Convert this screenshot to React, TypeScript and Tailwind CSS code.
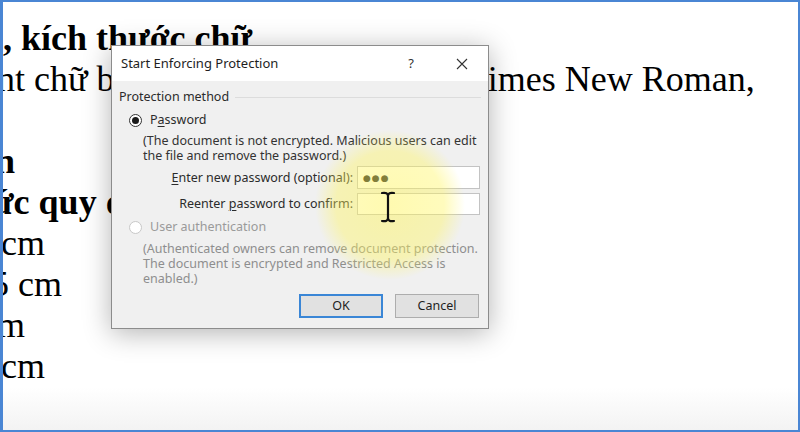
import React from "react";

const serif = { fontFamily: '"Liberation Serif", "Times New Roman", serif' };
const ui = { fontFamily: '"Noto Sans", "Open Sans", sans-serif' };

function DocumentText() {
  return (
    <div className="pt-[16px] text-[36px] leading-[41px] text-black whitespace-nowrap" style={serif}>
      <div className="font-bold">, kích thước chữ</div>
      <div className="flex -ml-[6px]">
        <span className="inline-block w-[470px] overflow-hidden">nt chữ bằng font chữ</span>
        <span>Times New Roman,</span>
      </div>
      <div>&nbsp;</div>
      <div className="font-bold -ml-[8px]">n</div>
      <div className="font-bold -ml-[11px]">ức quy định</div>
      <div className="-ml-[2px]">cm</div>
      <div className="-ml-[12px]">5 cm</div>
      <div className="-ml-[22px]">cm</div>
      <div className="-ml-[2px]">cm</div>
    </div>
  );
}

function Radio({ checked, disabled }: { checked?: boolean; disabled?: boolean }) {
  return (
    <span
      className={`flex h-[13px] w-[13px] items-center justify-center rounded-full border bg-white ${
        disabled ? "border-[#c8c8c8]" : "border-[#333333]"
      }`}
    >
      {checked && <span className="h-[7px] w-[7px] rounded-full bg-[#1a1a1a]" />}
    </span>
  );
}

function CloseIcon() {
  return (
    <svg width="12" height="12" viewBox="0 0 12 12" fill="none">
      <path d="M1 1 L11 11 M11 1 L1 11" stroke="#333" strokeWidth="1.1" />
    </svg>
  );
}

function IBeam() {
  return (
    <svg width="16" height="32" viewBox="0 0 16 32" fill="none">
      <path
        d="M2 2 Q8 1 8 5 Q8 1 14 2 M8 5 L8 27 M2 30 Q8 31 8 27 Q8 31 14 30"
        stroke="#111"
        strokeWidth="2.2"
        strokeLinecap="round"
      />
    </svg>
  );
}

function Dialog() {
  return (
    <div
      className="absolute left-[108px] top-[43px] flex h-[284px] w-[378px] flex-col border border-[#8c8c8c] bg-[#f0f0f0] text-[12.5px] shadow-[0_4px_26px_rgba(0,0,0,0.3)]"
      style={ui}
    >
      {/* title bar */}
      <div className="flex h-[35px] items-center bg-white pl-[9px] text-[13px] text-[#1e1e1e]">
        <span className="flex-1">Start Enforcing Protection</span>
        <span className="mr-[42px] text-[13px] text-[#333]">?</span>
        <span className="mr-[20px] flex">
          <CloseIcon />
        </span>
      </div>

      {/* body */}
      <div className="flex flex-col px-[7px] leading-[16px] text-[#2b2b2b]">
        <div className="mt-[8px] flex items-center gap-[6px]">
          <span>Protection method</span>
          <span className="h-px flex-1 bg-[#dcdcdc]" />
        </div>

        <div className="mt-[7px] flex items-center gap-[8px] pl-[10px]">
          <Radio checked />
          <span>
            P<span className="underline underline-offset-2">a</span>ssword
          </span>
        </div>

        <div className="mt-[5px] pl-[24px] leading-[15px] text-[#333]">
          <div>(The document is not encrypted. Malicious users can edit</div>
          <div>the file and remove the password.)</div>
        </div>

        <div className="mt-[3px] flex items-center justify-end gap-[4px] pr-[1px]">
          <span>
            <span className="underline underline-offset-2">E</span>nter new password (optional):
          </span>
          <div className="flex h-[23px] w-[123px] items-center border border-[#c3c3c3] bg-white pl-[5px]">
            <span className="text-[9px] tracking-[1px] text-[#222]" style={{ fontFamily: '"DejaVu Sans", sans-serif' }}>
              ●●●
            </span>
          </div>
        </div>

        <div className="mt-[4px] flex items-center justify-end gap-[4px] pr-[1px]">
          <span>
            Reenter <span className="underline underline-offset-2">p</span>assword to confirm:
          </span>
          <div className="h-[22px] w-[123px] border border-[#c3c3c3] bg-white" />
        </div>

        <div className="mt-[4px] flex items-center gap-[8px] pl-[10px] text-[#9a9a9a]">
          <Radio disabled />
          <span>User authentication</span>
        </div>

        <div className="mt-[6px] pl-[24px] leading-[15px] text-[#8e8e8e]">
          <div>(Authenticated owners can remove document protection.</div>
          <div>The document is encrypted and Restricted Access is</div>
          <div>enabled.)</div>
        </div>

        <div className="mt-[8px] flex justify-end gap-[12px] pr-[2px] text-[#1e1e1e]">
          <button className="h-[24px] w-[84px] border-2 border-[#3a86d6] bg-[#e1e1e1]">OK</button>
          <button className="h-[24px] w-[84px] border border-[#adadad] bg-[#e1e1e1]">Cancel</button>
        </div>
      </div>
    </div>
  );
}

export default function App() {
  return (
    <div className="relative h-[432px] w-[800px] overflow-hidden border-2 border-l-[3px] border-[#4a86d4] bg-gradient-to-b from-white from-[90%] to-[#f3f3f3]">
      <DocumentText />
      <Dialog />
      {/* cursor spotlight */}
      <div className="pointer-events-none absolute left-[312px] top-[128px] h-[150px] w-[150px] bg-[radial-gradient(closest-side,rgba(255,245,90,0.48),rgba(255,245,90,0.4)_72%,rgba(255,245,90,0))]" />
      <div className="pointer-events-none absolute left-[377px] top-[189px]">
        <IBeam />
      </div>
    </div>
  );
}
